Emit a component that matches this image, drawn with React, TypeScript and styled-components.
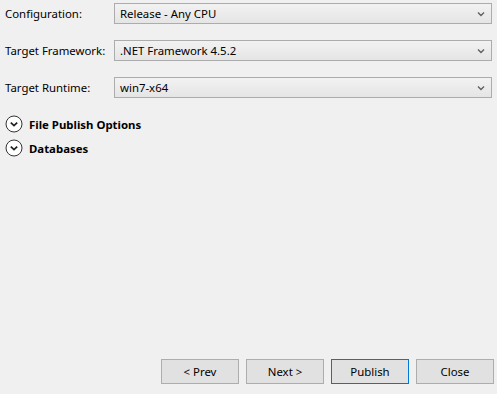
import React from "react";
import styled, { createGlobalStyle } from "styled-components";

const Global = createGlobalStyle`
  html, body { margin: 0; padding: 0; background: #f0f0f0; }
  body { font-family: "Noto Sans", "Open Sans", sans-serif; font-size: 11.4px; color: #000; }
`;

const Page = styled.div`
  width: 497px;
  height: 394px;
  display: flex;
  flex-direction: column;
  box-sizing: border-box;
  background: #f0f0f0;
  padding: 3px 5px 10px 5px;
`;

const Form = styled.div`
  display: flex;
  flex-direction: column;
  gap: 16px;
`;

const Row = styled.div`
  display: flex;
  align-items: center;
`;

const Label = styled.label`
  width: 109px;
  flex: none;
  font-size: 11.4px;
`;

const Combo = styled.div`
  flex: 1;
  height: 21px;
  box-sizing: border-box;
  border: 1px solid #acacac;
  background: linear-gradient(#f2f2f2, #e5e5e5);
  display: flex;
  align-items: center;
  padding: 0 6px 0 5px;
`;

const ComboText = styled.span`
  flex: 1;
  font-size: 11.4px;
`;

const Expanders = styled.div`
  display: flex;
  flex-direction: column;
  gap: 6px;
  margin-top: 17px;
`;

const Expander = styled.div`
  display: flex;
  align-items: center;
  gap: 6px;
  height: 18px;
  font-weight: bold;
  font-size: 11.4px;
`;

const Footer = styled.div`
  margin-top: auto;
  display: flex;
  justify-content: flex-end;
  gap: 7px;
  margin-right: -2px;
`;

const Button = styled.button<{ $primary?: boolean }>`
  width: 78px;
  height: 25px;
  box-sizing: border-box;
  border: 1px solid ${(p) => (p.$primary ? "#0078d7" : "#adadad")};
  background: #e1e1e1;
  font-family: inherit;
  font-size: 11.4px;
  color: #000;
  padding: 0;
`;

const Chevron = () => (
  <svg width="8" height="6" viewBox="0 0 8 6">
    <path d="M1 1.5 L4 4.5 L7 1.5" fill="none" stroke="#606060" strokeWidth="1.4" />
  </svg>
);

const CircleChevron = () => (
  <svg width="18" height="18" viewBox="0 0 18 18">
    <circle cx="9" cy="9" r="8" fill="#fff" stroke="#333" strokeWidth="1" />
    <path d="M5.8 7.6 L9 10.6 L12.2 7.6" fill="none" stroke="#222" strokeWidth="1.8" />
  </svg>
);

const fields = [
  { label: "Configuration:", value: "Release - Any CPU" },
  { label: "Target Framework:", value: ".NET Framework 4.5.2" },
  { label: "Target Runtime:", value: "win7-x64" },
];

export default function App() {
  return (
    <>
      <Global />
      <Page>
        <Form>
          {fields.map((f) => (
            <Row key={f.label}>
              <Label>{f.label}</Label>
              <Combo>
                <ComboText>{f.value}</ComboText>
                <Chevron />
              </Combo>
            </Row>
          ))}
        </Form>
        <Expanders>
          <Expander>
            <CircleChevron />
            File Publish Options
          </Expander>
          <Expander>
            <CircleChevron />
            Databases
          </Expander>
        </Expanders>
        <Footer>
          <Button>&lt; Prev</Button>
          <Button>Next &gt;</Button>
          <Button $primary>Publish</Button>
          <Button>Close</Button>
        </Footer>
      </Page>
    </>
  );
}
